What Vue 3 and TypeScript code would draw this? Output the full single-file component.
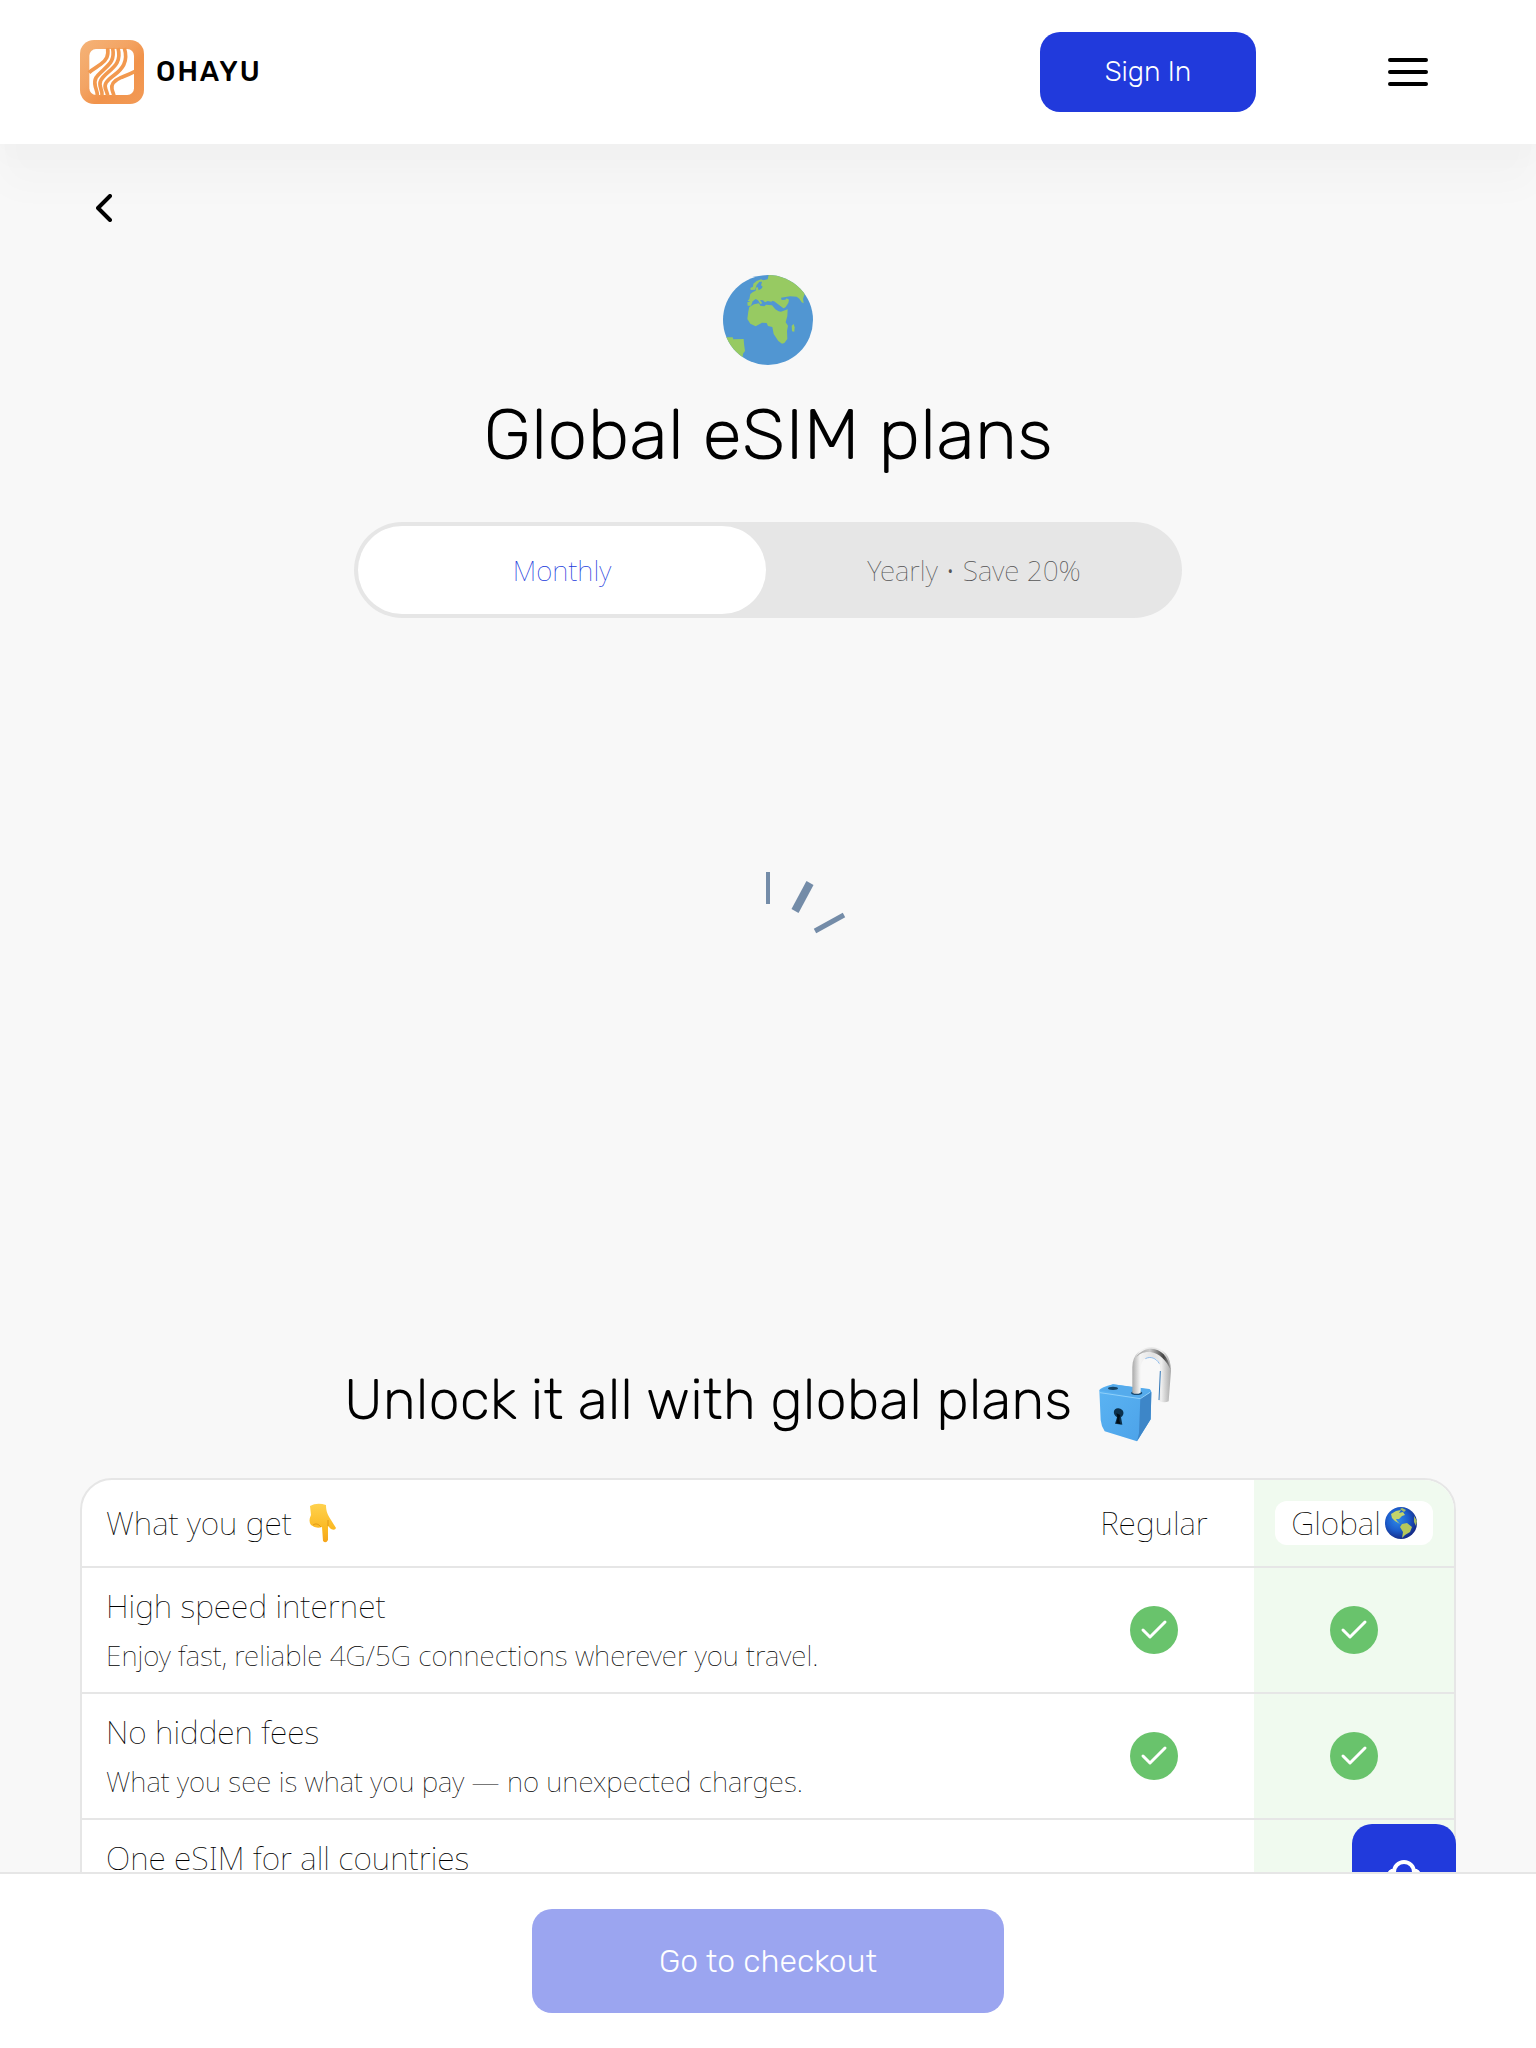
<script setup lang="ts">
import { ref } from 'vue'

interface Feature {
  title: string
  text: string
  regular: boolean
  global: boolean
}

type Billing = 'monthly' | 'yearly'

const billing = ref<Billing>('monthly')

const periods: { id: Billing; label: string }[] = [
  { id: 'monthly', label: 'Monthly' },
  { id: 'yearly', label: 'Yearly • Save 20%' },
]

const features: Feature[] = [
  {
    title: 'High speed internet',
    text: 'Enjoy fast, reliable 4G/5G connections wherever you travel.',
    regular: true,
    global: true,
  },
  {
    title: 'No hidden fees',
    text: 'What you see is what you pay — no unexpected charges.',
    regular: true,
    global: true,
  },
  {
    title: 'One eSIM for all countries',
    text: 'Travel anywhere with a single eSIM that covers every country on the list, with no need to swap cards.',
    regular: false,
    global: true,
  },
]
</script>

<template>
  <div class="app">
    <header class="header">
      <a class="brand" href="#" aria-label="Ohayu home">
        <svg class="brand-mark" viewBox="0 0 192 192" aria-hidden="true">
          <defs>
            <linearGradient id="brandFill" x1="0" y1="0" x2="1" y2="1">
              <stop offset="0" stop-color="#f5b377" />
              <stop offset="0.4" stop-color="#f3a464" />
              <stop offset="0.62" stop-color="#f1934b" />
              <stop offset="1" stop-color="#f29a56" />
            </linearGradient>
          </defs>
          <rect width="192" height="192" rx="42" fill="url(#brandFill)" />
          <rect x="28" y="27" width="134" height="138" rx="20" fill="#fff" />
          <g fill="none" stroke="#f2994f" stroke-width="11">
            <path d="M83 24C86 48 80 60 62 73C50 82 38 87 27 98" />
            <path d="M98 24C104 58 92 70 72 88C50 108 40 116 46 140C50 152 53 158 52 168" />
            <path d="M114 24C124 62 106 78 84 97C62 116 56 126 62 144C65 152 67 160 66 168" />
            <path d="M133 24C146 66 126 88 102 106C78 124 70 134 78 150C81 158 83 162 83 168" />
            <path d="M165 94C146 104 134 108 122 113C102 122 92 132 96 148C98 156 101 162 102 168" />
          </g>
        </svg>
        <span class="brand-name">OHAYU</span>
      </a>
      <div class="header-actions">
        <button class="sign-in" type="button">Sign In</button>
        <button class="menu" type="button" aria-label="Menu">
          <svg width="40" height="28" viewBox="0 0 40 28" aria-hidden="true">
            <path d="M2 2H38M2 14H38M2 26H38" stroke="#000" stroke-width="4" stroke-linecap="round" />
          </svg>
        </button>
      </div>
    </header>

    <main class="content">
      <div class="scroll">
        <button class="back" type="button" aria-label="Back">
          <svg width="16" height="28" viewBox="0 0 16 28" aria-hidden="true">
            <path d="M14 2L2 14L14 26" fill="none" stroke="#000" stroke-width="4" stroke-linecap="round" stroke-linejoin="round" />
          </svg>
        </button>

        <section class="hero">
          <svg class="hero-globe" viewBox="69 45 270 270" aria-hidden="true">
            <defs>
              <clipPath id="globeClip"><circle cx="204" cy="180" r="135" /></clipPath>
            </defs>
            <circle cx="204" cy="180" r="135" fill="#5196d2" />
            <g clip-path="url(#globeClip)" fill="#97ca62">
              <path d="M207 40L350 60L313 104L309 116L311 130L305 127L298 116L290 110L270 109L243 113L245 120L256 119L260 115L267 119L265 129L257 141L249 146L234 134L222 125L218 122L214 125L203 123L195 127L189 121L180 120L187 130L181 132L174 121L167 117L158 124L153 137L143 137L142 127L151 125L143 122L148 117L151 102L159 96L167 92L168 83L173 81L176 91L184 86L188 80L183 76L186 65L178 65L170 75L165 89L152 90L151 84L159 80L160 71L170 63L183 58L190 61L203 58Z" />
              <path d="M148 141L162 133L177 130L181 137L193 139L198 134L216 136L226 148L236 154L243 155L263 148L262 168L257 187L264 197L261 213L262 237L253 249L246 251L235 243L221 222L217 201L204 198L200 189L186 188L167 199L151 191L142 177L145 154Z" />
              <path d="M60 232L98 232L100 238L131 237L132 251L135 273L129 281L128 292L90 310Z" />
              <path d="M275 197L281 192L284 202L283 215L276 214Z" />
            </g>
            <path d="M220 125L229 131L239 139L251 148" fill="none" stroke="#5196d2" stroke-width="4" />
          </svg>
          <h1>Global eSIM plans</h1>
          <fieldset>
            <legend class="hidden">Billing period</legend>
            <div class="switch">
              <label v-for="period in periods" :key="period.id" class="switch-item" :class="{ active: billing === period.id }">
                <input v-model="billing" class="hidden" type="radio" name="billing" :value="period.id" />
                <span>{{ period.label }}</span>
              </label>
            </div>
          </fieldset>
        </section>

        <div class="loader" role="status" aria-label="Loading plans">
          <svg width="160" height="160" viewBox="0 0 160 160" aria-hidden="true">
            <g fill="none" stroke="#748ca8">
              <path d="M80 0V32" stroke-width="4" />
              <path d="M122 11L107 39" stroke-width="8" />
              <path d="M156 43L127 59" stroke-width="5" />
            </g>
          </svg>
        </div>

        <section class="compare">
          <div class="compare-head">
            <h2>Unlock it all with global plans</h2>
            <svg class="lock" viewBox="84 48 288 288" aria-hidden="true">
              <defs>
                <linearGradient id="steel" x1="0" y1="0" x2="1" y2="0">
                  <stop offset="0" stop-color="#aaa" />
                  <stop offset="0.2" stop-color="#f4f4f4" />
                  <stop offset="0.55" stop-color="#e2e2e2" />
                  <stop offset="0.75" stop-color="#eee" />
                  <stop offset="1" stop-color="#aaa" />
                </linearGradient>
                <linearGradient id="lockFront" x1="0" y1="0" x2="1" y2="1">
                  <stop offset="0" stop-color="#5bb4f3" />
                  <stop offset="1" stop-color="#4ba1e8" />
                </linearGradient>
                <linearGradient id="shade" x1="0" y1="0" x2="1" y2="0">
                  <stop offset="0" stop-color="#999" />
                  <stop offset="0.4" stop-color="#ccc" />
                  <stop offset="0.8" stop-color="#444" />
                  <stop offset="1" stop-color="#999" />
                </linearGradient>
              </defs>
              <path d="M94 180Q98 173 135 163L244 177Q251 180 250 192L248 268L207 334L110 304Q100 290 98 270Z" fill="url(#lockFront)" />
              <path d="M217 204L250 186L248 268L207 334L213 310Z" fill="#3d86c8" />
              <path d="M94 181L135 163L246 179L218 204Z" fill="#55abec" />
              <path d="M96 188L217 206L246 187" fill="none" stroke="#8fd0fa" stroke-width="3" />
              <ellipse cx="135" cy="175" rx="15" ry="5" fill="#164466" />
              <ellipse cx="206" cy="189" rx="17" ry="6" fill="#174a73" />
              <path d="M193 188V112C193 72 220 52 250 52C287 53 309 78 309 122L302 214Q288 221 272 212L277 122C277 95 267 82 248 82C228 82 218 94 218 120V188Q205 195 193 188Z" fill="url(#steel)" />
              <path d="M203 84C216 62 235 56 249 56C279 57 301 78 308 119C295 92 276 70 246 66C226 65 214 71 203 84Z" fill="url(#shade)" />
              <path d="M232 86C247 78 265 84 274 101" fill="none" stroke="#8dbbec" stroke-width="3" />
              <path d="M277 123L273 210" stroke="#3579b9" stroke-width="3" />
              <path d="M151 235C170 237 170 256 159 262L163 284L141 281L147 262C132 253 136 234 151 235Z" fill="#0c304b" />
              <path d="M145 250Q151 264 145 279L158 283Q151 269 157 255Z" fill="#020c14" />
            </svg>
          </div>

          <div class="table-frame">
            <table>
              <thead>
                <tr>
                  <th scope="col" class="feature">
                    <span class="with-icon">
                      What you get
                      <svg width="40" height="40" viewBox="0 0 40 40" aria-hidden="true">
                        <defs>
                          <linearGradient id="skin" x1="0" y1="0" x2="0" y2="1">
                            <stop offset="0" stop-color="#ffd24e" />
                            <stop offset="0.65" stop-color="#fbb923" />
                            <stop offset="1" stop-color="#f5a51c" />
                          </linearGradient>
                        </defs>
                        <path d="M6 3Q13-1 22 2C22 9 24 12 27 17L32 25Q31 28 27 26L24 23V37Q22 41 19 38L18 24Q12 26 7 22Q4 18 7 12Z" fill="url(#skin)" />
                        <path d="M9 22Q13 19 17 24M24 17V23" fill="none" stroke="#e29a17" stroke-width="1" />
                      </svg>
                    </span>
                  </th>
                  <th scope="col" class="plan">Regular</th>
                  <th scope="col" class="plan highlight">
                    <span class="pill">
                      Global
                      <svg width="32" height="32" viewBox="0 0 32 32" aria-hidden="true">
                        <defs>
                          <radialGradient id="ocean" cx="0.4" cy="0.4" r="0.62">
                            <stop offset="0" stop-color="#2f8ae8" />
                            <stop offset="0.55" stop-color="#1c5dcc" />
                            <stop offset="1" stop-color="#152a86" />
                          </radialGradient>
                        </defs>
                        <circle cx="16" cy="16" r="16" fill="url(#ocean)" />
                        <path d="M6 7L11 4L16 3L14 6L18 5L20 8L17 9L14 12L11 12L12 14L15 17L10 14L7 11Z" fill="#c2d46b" />
                        <path d="M17 1L21 3L19 5L15 2ZM29 9L32 14L31 19L29 15Z" fill="#a6bc64" />
                        <path d="M17 17L22 16L27 20L25 25L20 28L17 31L18 25L15 20Z" fill="#b6c75b" />
                      </svg>
                    </span>
                  </th>
                </tr>
              </thead>
              <tbody>
                <tr v-for="feature in features" :key="feature.title">
                  <th scope="row" class="feature">
                    <span class="feature-title">{{ feature.title }}</span>
                    <span class="feature-text">{{ feature.text }}</span>
                  </th>
                  <td class="plan">
                    <svg v-if="feature.regular" class="check" viewBox="0 0 48 48" role="img" aria-label="Included">
                      <circle cx="24" cy="24" r="24" fill="#69c36c" />
                      <path d="M13 24L20 31L35 16" fill="none" stroke="#fff" stroke-width="3" stroke-linecap="round" stroke-linejoin="round" />
                    </svg>
                  </td>
                  <td class="plan highlight">
                    <svg v-if="feature.global" class="check" viewBox="0 0 48 48" role="img" aria-label="Included">
                      <circle cx="24" cy="24" r="24" fill="#69c36c" />
                      <path d="M13 24L20 31L35 16" fill="none" stroke="#fff" stroke-width="3" stroke-linecap="round" stroke-linejoin="round" />
                    </svg>
                  </td>
                </tr>
              </tbody>
            </table>
          </div>
        </section>
      </div>

      <button class="support" type="button" aria-label="Support">
        <svg width="40" height="40" viewBox="0 0 40 40" aria-hidden="true">
          <g fill="none" stroke="#fff" stroke-width="4" stroke-linecap="round">
            <path d="M10 24V16A10 10 0 0 1 30 16V24" />
            <path d="M8 15Q5 16 5 20M32 15Q35 16 35 20M5 20V22M35 20V24Q34 32 24 34" />
          </g>
        </svg>
      </button>
    </main>

    <footer class="footer">
      <button class="checkout" type="button" disabled>Go to checkout</button>
    </footer>
  </div>
</template>

<style>
body {
  margin: 0;
  background: #f8f8f8;
}
</style>

<style scoped>
* {
  box-sizing: border-box;
}

.app {
  display: flex;
  flex-direction: column;
  height: 100vh;
  background: #f8f8f8;
  color: #000;
  font-family: 'Noto Sans', sans-serif;
  font-weight: 100;
}

button {
  display: flex;
  align-items: center;
  justify-content: center;
  padding: 0;
  border: 0;
  background: none;
  color: inherit;
  cursor: pointer;
}

.hidden {
  position: absolute;
  width: 1px;
  height: 1px;
  margin: 0;
  padding: 0;
  overflow: hidden;
  opacity: 0;
}

.header {
  position: relative;
  z-index: 2;
  display: flex;
  flex: none;
  align-items: center;
  justify-content: space-between;
  height: 144px;
  padding: 0 80px;
  background: #fff;
  box-shadow:
    0 6px 6px rgba(0, 0, 0, 0.008),
    0 20px 18px rgba(0, 0, 0, 0.012),
    0 44px 36px rgba(0, 0, 0, 0.018);
}

.brand {
  display: flex;
  align-items: center;
  gap: 12px;
  color: #000;
  text-decoration: none;
}

.brand-mark {
  width: 64px;
  height: 64px;
}

.brand-name {
  font: 500 28px/32px Rubik, Roboto, sans-serif;
  letter-spacing: 2px;
}

.header-actions {
  display: flex;
  align-items: center;
  gap: 104px;
}

.sign-in {
  width: 216px;
  height: 80px;
  border-radius: 20px;
  background: #213adc;
  color: #fff;
  font: 300 28px/32px Rubik, Roboto, sans-serif;
}

.menu {
  width: 96px;
  height: 80px;
}

.content {
  position: relative;
  flex: 1;
  min-height: 0;
  overflow: hidden;
}

.scroll {
  height: 100%;
  padding: 40px 80px 0;
  overflow-y: auto;
  scrollbar-width: none;
}

.back {
  width: 48px;
  height: 48px;
}

.hero {
  display: flex;
  flex-direction: column;
  align-items: center;
  padding-top: 43px;
}

.hero-globe {
  width: 90px;
  height: 90px;
}

h1,
h2 {
  margin: 0;
  font-family: Rubik, Roboto, sans-serif;
  font-weight: 300;
}

h1 {
  margin: 26px 0 43px;
  font-size: 72px;
  line-height: 88px;
}

fieldset {
  width: 828px;
  max-width: 100%;
  margin: 0;
  padding: 0;
  border: 0;
}

.switch {
  display: flex;
  gap: 4px;
  height: 96px;
  padding: 4px;
  border-radius: 48px;
  background: #e6e6e6;
}

.switch-item {
  position: relative;
  display: flex;
  flex: 1 1 406px;
  align-items: center;
  justify-content: center;
  border-radius: 44px;
  color: #555;
  font-size: 28px;
  line-height: 40px;
  cursor: pointer;
}

.switch-item.active {
  background: #fff;
  color: #213adc;
}

.loader {
  display: flex;
  align-items: center;
  justify-content: center;
  height: 668px;
}

.compare {
  padding: 60px 0 40px;
}

.compare-head {
  display: flex;
  align-items: flex-end;
  justify-content: center;
  gap: 24px;
  margin-bottom: 36px;
}

h2 {
  font-size: 56px;
  line-height: 84px;
}

.lock {
  flex: none;
  width: 96px;
  height: 96px;
}

.table-frame {
  overflow: hidden;
  border: 2px solid #e6e6e6;
  border-radius: 32px;
  background: #fff;
}

table {
  width: 100%;
  border-spacing: 0;
}

th,
td {
  padding: 0;
  border-bottom: 2px solid #e6e6e6;
  font-weight: 100;
}

thead th {
  height: 88px;
  font-size: 32px;
  line-height: 48px;
}

.feature {
  padding: 0 24px;
  text-align: left;
}

tbody .feature {
  padding: 14px 24px 16px;
}

.with-icon {
  display: flex;
  align-items: center;
  gap: 12px;
}

.feature-title,
.feature-text {
  display: block;
}

.feature-title {
  margin-bottom: 4px;
  font-size: 32px;
  line-height: 48px;
}

.feature-text {
  max-width: 800px;
  font-size: 28px;
  line-height: 42px;
}

.plan {
  width: 200px;
  text-align: center;
}

.highlight {
  background: #f0faef;
}

.pill {
  display: flex;
  align-items: center;
  gap: 4px;
  width: fit-content;
  height: 44px;
  margin: 0 auto;
  padding: 0 16px;
  border-radius: 12px;
  background: #fff;
}

.check {
  width: 48px;
  height: 48px;
  vertical-align: middle;
}

.support {
  position: absolute;
  right: 80px;
  bottom: -56px;
  width: 104px;
  height: 104px;
  border-radius: 20px;
  background: #213adc;
}

.footer {
  position: relative;
  z-index: 1;
  display: flex;
  flex: none;
  justify-content: center;
  padding: 35px 80px;
  border-top: 2px solid #e6e6e6;
  background: #fff;
}

.checkout {
  width: 472px;
  height: 104px;
  border-radius: 20px;
  background: #9ba5f0;
  color: #fff;
  font: 300 32px/40px Rubik, Roboto, sans-serif;
}
</style>
